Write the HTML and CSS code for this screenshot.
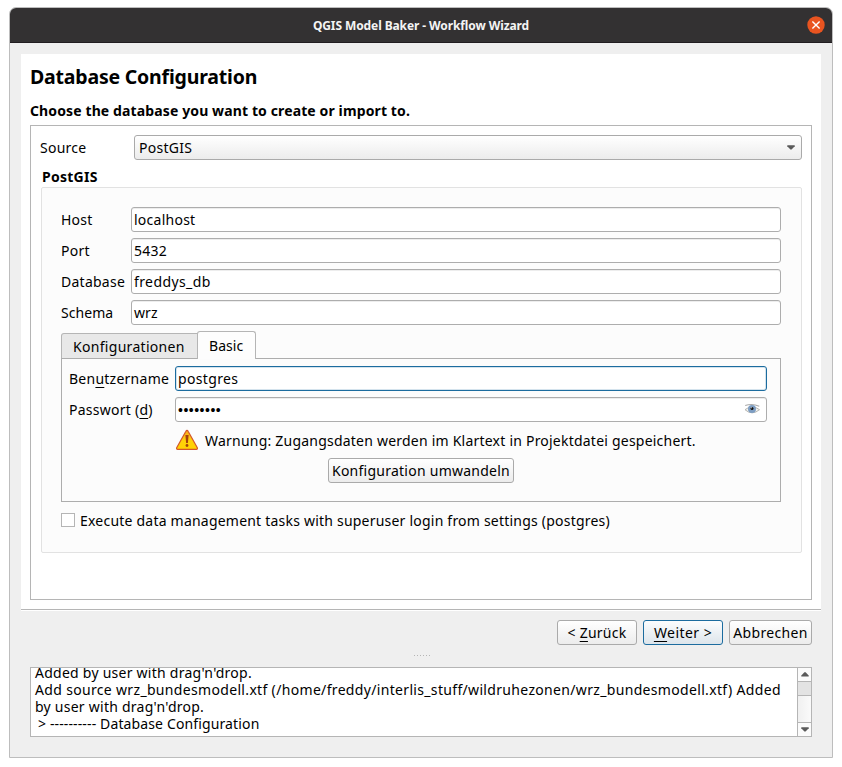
FILE: index.html
```html
<!DOCTYPE html>
<html lang="de">
<head>
<meta charset="utf-8">
<title>QGIS Model Baker - Workflow Wizard</title>
<link rel="stylesheet" href="styles.css">
</head>
<body>
<div class="window">
  <header class="titlebar">
    <span class="titlebar-text">QGIS Model Baker - Workflow Wizard</span>
    <svg class="close" width="18" height="18" viewBox="0 0 18 18"><circle cx="9" cy="9" r="8.7" fill="#e95420"/><path d="M5.4 5.4l7.2 7.2M12.6 5.4l-7.2 7.2" stroke="#fff" stroke-width="1.4"/></svg>
  </header>
  <main class="page">
    <h1><span class="t-title">Database Configuration</span></h1>
    <h2><span class="t-sub">Choose the database you want to create or import to.</span></h2>
    <div class="frame">
      <div class="source">
        <span class="t-source">Source</span>
        <div class="combo"><span class="t-postgis">PostGIS</span>
          <svg width="8" height="5" viewBox="0 0 8 5"><path d="M.3 .2h7.4v1L4.6 4.5H3.4L.3 1.2z" fill="#5a5a5a"/></svg>
        </div>
      </div>
      <div class="group-title"><span class="t-group">PostGIS</span></div>
      <section class="group">
        <div class="fields">
          <label><span class="t-host">Host</span></label><div class="input"><span class="t-localhost">localhost</span></div>
          <label><span class="t-port">Port</span></label><div class="input"><span class="t-5432">5432</span></div>
          <label><span class="t-database">Database</span></label><div class="input"><span class="t-freddys">freddys_db</span></div>
          <label><span class="t-schema">Schema</span></label><div class="input"><span class="t-wrz">wrz</span></div>
        </div>
        <div class="tabs">
          <div class="tab"><span class="t-konf">Konfigurationen</span></div>
          <div class="tab active"><span class="t-basic">Basic</span></div>
        </div>
        <div class="pane">
          <div class="credentials">
            <label><span class="t-user">Ben<u>u</u>tzername</span></label><div class="input focus"><span class="t-postgres">postgres</span></div>
            <label><span class="t-pass">Passwort (<u>d</u>)</span></label>
            <div class="input"><span class="dots">••••••••</span>
              <svg class="eye" width="17" height="13" viewBox="0 0 17 13"><path d="M1 6.7Q8 1 15.5 6.7Q8 13 1 6.7z" fill="#f3f3f1" stroke="#b5b5b0" stroke-width="1"/><path d="M1.2 2.6Q8 .2 15.3 3.2" fill="none" stroke="#aaa" stroke-width="1.1"/><circle cx="8" cy="6" r="4" fill="#7d9dc2"/><circle cx="8" cy="5.5" r="1.5" fill="#111"/><circle cx="7.4" cy="4.8" r=".5" fill="#fff"/></svg>
            </div>
          </div>
          <div class="warning">
            <svg width="24" height="22" viewBox="0 0 24 22"><defs><linearGradient id="amber" x1="0" y1="0" x2="0" y2="1"><stop offset="0" stop-color="#f7a51c"/><stop offset=".5" stop-color="#ffcf0a"/><stop offset="1" stop-color="#ffd300"/></linearGradient></defs><path d="M12 1.4q.7 0 1.1.8l9.2 16.6q.5 1.6-1 1.6H2.7q-1.5 0-1-1.6l9.2-16.6q.4-.8 1.1-.8z" fill="url(#amber)" stroke="#d3562a" stroke-width="1.2"/><path d="M10.4 6h3.2l-.7 8h-1.8z" fill="#a33f0c"/><circle cx="12" cy="16.5" r="1.4" fill="#a33f0c"/></svg>
            <span class="t-warn">Warnung: Zugangsdaten werden im Klartext in Projektdatei gespeichert.</span>
          </div>
          <div class="button convert"><span class="t-convert">Konfiguration umwandeln</span></div>
        </div>
        <div class="check"><i class="box"></i><span class="t-exec">Execute data management tasks with superuser login from settings (postgres)</span></div>
      </section>
    </div>
  </main>
  <div class="nav">
    <div class="button back"><span class="t-back">&lt; <u>Z</u>urück</span></div>
    <div class="button next"><span class="t-next"><u>W</u>eiter &gt;</span></div>
    <div class="button cancel"><span class="t-cancel">Abbrechen</span></div>
  </div>
  <div class="grip"><i></i><i></i><i></i><i></i><i></i><i></i></div>
  <div class="log">
    <div class="lines">
      <div><span class="t-l1">Added by user with drag'n'drop.</span></div>
      <div><span class="t-l2">Add source wrz_bundesmodell.xtf (/home/freddy/interlis_stuff/wildruhezonen/wrz_bundesmodell.xtf) Added</span></div>
      <div><span class="t-l3">by user with drag'n'drop.</span></div>
      <div class="last"><span class="t-l4">&gt; ---------- Database Configuration</span></div>
    </div>
    <div class="scroll">
      <div class="arrow"><svg width="8" height="5" viewBox="0 0 8 5"><path d="M.3 4.5h7.4v-1L4.6 .2H3.4L.3 3.5z" fill="#5a5a5a"/></svg></div>
      <div class="thumb"></div>
      <div class="track"></div>
      <div class="arrow"><svg width="8" height="5" viewBox="0 0 8 5"><path d="M.3 .2h7.4v1L4.6 4.5H3.4L.3 1.2z" fill="#5a5a5a"/></svg></div>
    </div>
  </div>
</div>
</body>
</html>
```
FILE: styles.css
```css
* { box-sizing: border-box; }
body { margin: 0; padding: 7px 9px; background: #fff; color: #000; font: 14px/20px "Noto Sans", sans-serif; }
span { white-space: pre; letter-spacing: .25px; }
svg { display: block; flex: none; }
u { text-decoration-thickness: 1px; text-underline-offset: 3px; }
.window { width: 824px; height: 751px; border: 1px solid #bdbdbd; border-radius: 7px 7px 0 0; background: #efefef; overflow: hidden; }
.titlebar { height: 35px; background: #333132; border-bottom: 1px solid #211d20; display: grid; grid-template-columns: 25px 1fr 25px; align-items: center; }
.titlebar-text { grid-column: 2; text-align: center; color: #f4f4f4; font-weight: 700; font-size: 12px; letter-spacing: -.1px; padding-top: 1px; }
.page { margin: 11px 11px 0; height: 557px; width: 800px; background: #fff; padding: 10px 9px 0; border-bottom: 1px solid #fff; box-shadow: inset 0 -1px #b5b5b5; }
h1 { margin: 0; font-size: 19.5px; line-height: 26px; }
h2 { margin: 11px 0 0; font-size: 14px; line-height: 20px; height: 24px; }
.t-title { letter-spacing: -.2px; }
.t-sub { letter-spacing: .12px; }
.frame { height: 475px; width: 782px; border: 1px solid #b5b5b5; padding: 9px; }
.source { display: grid; grid-template-columns: 94px 1fr; align-items: center; }
.combo, .button { height: 25px; border: 1px solid #aaa; border-radius: 3px; background: linear-gradient(#fff, #ececec); display: flex; align-items: center; }
.combo { padding: 0 6px 0 4px; justify-content: space-between; }
.group-title { font-weight: 700; padding: 7px 0 0 2px; height: 27px; }
.group { margin-left: 1px; height: 366px; width: 761px; border: 1px solid #e2e2e2; border-radius: 2px; background: #fcfcfc; padding: 19px 20px 0 19px; }
.fields { display: grid; grid-template-columns: 70px 650px; row-gap: 6px; align-items: center; }
.t-schema, .t-basic, .t-wrz { letter-spacing: .05px; }
.t-freddys { letter-spacing: .4px; }
.input { height: 25px; border: 1px solid #adadad; border-radius: 3px; background: #fff; box-shadow: inset 0 1px #ededed; padding-left: 2px; display: flex; align-items: center; justify-content: space-between; }
.focus { border-color: #1c6c9f; box-shadow: inset 0 0 0 1px #d4e3ed; }
.tabs { display: flex; align-items: flex-end; height: 33px; padding-top: 6px; }
.tab { width: 137px; height: 25px; border: 1px solid #b5b5b5; border-bottom: 0; border-radius: 3px 0 0; background: #e8e8e8; display: flex; align-items: center; padding-left: 11px; }
.tab span { position: relative; top: 1px; }
.tab .t-konf { letter-spacing: .3px; }
.active { width: 59px; height: 28px; margin: 0 0 -1px -1px; border-radius: 3px 3px 0 0; background: #fdfdfd; z-index: 1; }
.active span { top: 0; }
.pane { width: 720px; height: 144px; border: 1px solid #adadad; padding: 7px 13px 0 7px; }
.credentials { display: grid; grid-template-columns: 106px 592px; row-gap: 6px; align-items: center; }
.t-postgres { letter-spacing: .35px; }
.dots { font: 14px/20px "Liberation Sans", sans-serif; letter-spacing: .5px; }
.eye { margin-right: 5px; }
.warning { display: flex; gap: 6px; margin: 7px 0 0 106px; height: 22px; align-items: center; }
.t-warn { letter-spacing: .22px; padding-top: 2px; }
.button { justify-content: center; }
.convert { width: 186px; margin: 7px 0 0 259px; }
.check { display: flex; align-items: center; margin-top: 8px; height: 20px; gap: 5px; }
.t-exec { letter-spacing: .215px; padding-top: 2px; }
.box { width: 14px; height: 14px; border: 1px solid #b5b5b5; background: #fff; }
.nav { display: flex; justify-content: flex-end; gap: 6px; margin: 9px 20px 0 0; }
.back, .next { width: 80px; }
.next { border-color: #1c6c9f; background: linear-gradient(#fcfdfe, #dde5eb); }
.cancel { width: 83px; }
.t-next { letter-spacing: .45px; }
.t-cancel { letter-spacing: .33px; }
.grip { display: flex; gap: 2px; height: 1px; margin: 10px 0 11px 404px; }
.grip i { width: 1px; height: 1px; background: #b5b5b5; }
.log { margin-left: 20px; width: 782px; height: 70px; border: 1px solid #b5b5b5; background: #fff; display: flex; overflow: hidden; }
.lines { flex: 1; padding-left: 4px; margin-top: -4px; line-height: 17px; }
.t-l2 { letter-spacing: .33px; }
.last { padding-left: 3px; }
.t-l4 { letter-spacing: .13px; }
.scroll { width: 14px; border-left: 1px solid #b5b5b5; background: #f6f6f6; display: flex; flex-direction: column; flex: none; }
.arrow { height: 13px; display: flex; align-items: center; justify-content: center; background: #fbfbfb; }
.thumb { height: 15px; border: solid #b5b5b5; border-width: 1px 0; background: #e3e3e3; }
.track { flex: 1; border-bottom: 1px solid #b5b5b5; background: linear-gradient(90deg, #f0f0f0, #fafafa); }
```
